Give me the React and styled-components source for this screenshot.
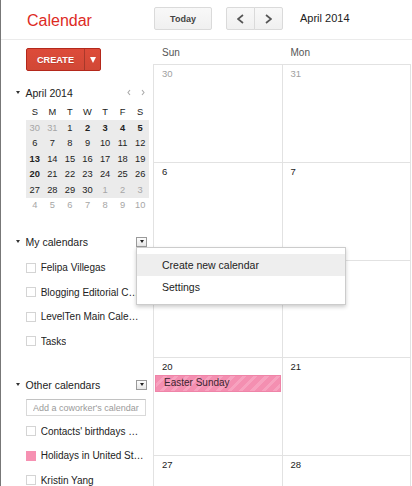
import React from "react";
import styled, { createGlobalStyle } from "styled-components";

const GlobalStyle = createGlobalStyle`
  html, body {
    margin: 0;
    padding: 0;
    background: #fff;
  }
  body {
    font-family: "Liberation Sans", Arial, sans-serif;
    color: #222;
  }
  * {
    box-sizing: border-box;
  }
`;

const Page = styled.div`
  width: 412px;
  height: 486px;
  overflow: hidden;
  border-left: 1px solid #777;
  display: flex;
  flex-direction: column;
  background: #fff;
`;

const TopBar = styled.header`
  height: 40px;
  flex: none;
  border-bottom: 1px solid #ebebeb;
  display: flex;
  align-items: flex-start;
  padding-top: 7px;
`;

const Logo = styled.div`
  width: 153px;
  padding-left: 26px;
  font-size: 16px;
  line-height: 27px;
  color: #dd2a1f;
`;

const GreyButton = styled.button`
  height: 23px;
  padding: 0;
  border: 1px solid #dadada;
  border-radius: 2px;
  background: linear-gradient(#f8f8f8, #f0f0f0);
  font-family: inherit;
  font-weight: bold;
  font-size: 9px;
  color: #444;
  display: flex;
  align-items: center;
  justify-content: center;
`;

const TodayButton = styled(GreyButton)`
  width: 58px;
`;

const NavGroup = styled.div`
  display: flex;
  margin-left: 14px;
`;

const NavButton = styled(GreyButton)`
  width: 29px;
  border-radius: ${(p) => (p.$right ? "0 2px 2px 0" : "2px 0 0 2px")};
  margin-left: ${(p) => (p.$right ? "-1px" : "0")};
`;

const MonthLabel = styled.div`
  margin-left: 17px;
  line-height: 23px;
  font-size: 11px;
  color: #222;
`;

const Body = styled.div`
  flex: 1;
  min-height: 0;
  display: flex;
`;

const Sidebar = styled.aside`
  width: 152px;
  flex: none;
  padding: 8px 3px 0 25px;
  display: flex;
  flex-direction: column;

  & > * {
    flex-shrink: 0;
  }
`;

const CreateButton = styled.div`
  display: flex;
  width: 75px;
  height: 23px;
  border: 1px solid #b4281b;
  border-radius: 2px;
  background: linear-gradient(#dd4b39, #d14836);
  color: #fff;
`;

const CreateLabel = styled.div`
  flex: 1;
  display: flex;
  align-items: center;
  justify-content: center;
  font-weight: bold;
  font-size: 9.2px;
  text-shadow: 0 1px rgba(0, 0, 0, 0.15);
`;

const CreateArrow = styled.div`
  width: 16px;
  border-left: 1px solid rgba(0, 0, 0, 0.22);
  display: flex;
  align-items: center;
  justify-content: center;
`;

const DownTriangle = styled.span`
  width: 0;
  height: 0;
  border-left: ${(p) => p.$size / 2}px solid transparent;
  border-right: ${(p) => p.$size / 2}px solid transparent;
  border-top: ${(p) => p.$h}px solid ${(p) => p.$color};
`;

const SectionHeader = styled.div`
  display: flex;
  align-items: center;
  height: 16px;
  margin-top: ${(p) => p.$top}px;
  margin-left: -11px;
  font-size: 10.5px;
  color: #222;
`;

const Toggle = styled(DownTriangle)`
  margin: 0 5.5px 0 1px;
`;

const MiniArrows = styled.div`
  margin-left: auto;
  padding-right: 5px;
  display: flex;
  gap: 10px;
  align-items: center;
`;

const MiniGrid = styled.div`
  margin-top: 4px;
  width: 123px;
  display: grid;
  grid-template-columns: repeat(7, 1fr);
  grid-auto-rows: 15.5px;
  font-size: 9.3px;
`;

const MiniDay = styled.div`
  display: flex;
  align-items: center;
  justify-content: center;
  color: ${(p) => (p.$muted ? "#a6a6a6" : "#222")};
  font-weight: ${(p) => (p.$bold ? "bold" : "normal")};
  background: ${(p) => (p.$shade ? "#ebebeb" : "transparent")};
`;

const DropBox = styled.div`
  position: relative;
  width: 11px;
  height: 10px;
  margin-left: auto;
  margin-right: 3px;
  border: 1px solid #9a9a9a;
  background: linear-gradient(#fdfdfd, #e6e6e6);
  display: flex;
  align-items: center;
  justify-content: center;
`;

const Menu = styled.div`
  position: absolute;
  left: -1px;
  top: 9px;
  width: 210px;
  padding: 6px 0;
  background: #fff;
  border: 1px solid rgba(0, 0, 0, 0.2);
  box-shadow: 0 2px 4px rgba(0, 0, 0, 0.2);
  z-index: 10;
`;

const MenuItem = styled.div`
  height: 22px;
  line-height: 22px;
  padding-left: 25px;
  font-size: 10.5px;
  color: #222;
  background: ${(p) => (p.$active ? "#eee" : "transparent")};
`;

const CalList = styled.div`
  margin-top: ${(p) => p.$top}px;
  display: flex;
  flex-direction: column;
`;

const CalItem = styled.div`
  display: flex;
  align-items: center;
  height: 24.6px;
  flex: none;
  font-size: 10px;
  color: #222;
`;

const Check = styled.span`
  flex: none;
  width: 10px;
  height: 10px;
  margin-right: 4.7px;
  border: 1px solid ${(p) => (p.$color ? p.$color : "#d4d4d4")};
  background: ${(p) => p.$color || "#fff"};
`;

const ItemLabel = styled.span`
  max-width: 103px;
  overflow: hidden;
  white-space: nowrap;
  text-overflow: ellipsis;
`;

const CoworkerInput = styled.input`
  margin-top: 6.3px;
  width: 120px;
  height: 17.4px;
  padding: 0 6px;
  border: 1px solid #d9d9d9;
  border-top-color: #c2c2c2;
  font-family: inherit;
  font-size: 9px;
  outline: none;

  &::placeholder {
    color: #9a9a9a;
  }
`;

const Main = styled.main`
  flex: 1;
  display: flex;
  flex-direction: column;
  padding-right: 1px;
`;

const ColHeads = styled.div`
  height: 24px;
  flex: none;
  padding-left: 1px;
  display: grid;
  grid-template-columns: 1fr 1fr;
  align-items: center;
`;

const ColHead = styled.div`
  padding-left: 8px;
  font-size: 10px;
  color: #555;
`;

const MonthGrid = styled.div`
  flex: none;
  display: grid;
  grid-template-columns: 1fr 1fr;
  grid-auto-rows: 97.75px;
  border-left: 1px solid #e2e2e2;
  border-top: 1px solid #e2e2e2;
`;

const Cell = styled.div`
  border-right: 1px solid #e2e2e2;
  border-bottom: 1px solid #e2e2e2;
  padding-top: 3px;
`;

const CellDate = styled.div`
  padding-left: 8px;
  font-size: 9.5px;
  line-height: 12px;
  color: ${(p) => (p.$muted ? "#a0a0a0" : "#222")};
`;

const Event = styled.div`
  margin: 2px 1px 0 1px;
  height: 16.4px;
  line-height: 14.4px;
  padding-left: 8px;
  font-size: 10px;
  color: #3b2530;
  border: 1px solid #ef84a8;
  background: repeating-linear-gradient(
    135deg,
    #f48fb1 0px,
    #f48fb1 5px,
    #f7a2bf 5px,
    #f7a2bf 8px
  );
`;

const Chevron = ({ dir, w, h, color, stroke }) => (
  <svg width={w} height={h} viewBox={`0 0 ${w} ${h}`}>
    <path
      d={
        dir === "left"
          ? `M${w - 1} 1 L1 ${h / 2} L${w - 1} ${h - 1}`
          : `M1 1 L${w - 1} ${h / 2} L1 ${h - 1}`
      }
      fill="none"
      stroke={color}
      strokeWidth={stroke}
    />
  </svg>
);

const weekdays = ["S", "M", "T", "W", "T", "F", "S"];

const miniWeeks = [
  [30, 31, 1, 2, 3, 4, 5],
  [6, 7, 8, 9, 10, 11, 12],
  [13, 14, 15, 16, 17, 18, 19],
  [20, 21, 22, 23, 24, 25, 26],
  [27, 28, 29, 30, 1, 2, 3],
  [4, 5, 6, 7, 8, 9, 10],
];

const boldDays = [2, 3, 4, 5, 13, 20];

const isMuted = (w, i) => (w === 0 && i < 2) || (w === 4 && i > 3) || w === 5;

const myCalendars = [
  "Felipa Villegas",
  "Blogging Editorial Calendar",
  "LevelTen Main Calendar",
  "Tasks",
];

const otherCalendars = [
  { name: "Contacts' birthdays and events" },
  { name: "Holidays in United States", color: "#f691b2" },
  { name: "Kristin Yang" },
];

const monthCells = [
  [{ d: 30, muted: true }, { d: 31, muted: true }],
  [{ d: 6 }, { d: 7 }],
  [{ d: 13 }, { d: 14 }],
  [{ d: 20, event: "Easter Sunday" }, { d: 21 }],
  [{ d: 27 }, { d: 28 }],
];

export default function App() {
  return (
    <>
      <GlobalStyle />
      <Page>
        <TopBar>
          <Logo>Calendar</Logo>
          <TodayButton>Today</TodayButton>
          <NavGroup>
            <NavButton>
              <Chevron dir="left" w={7} h={10} color="#555" stroke={1.7} />
            </NavButton>
            <NavButton $right>
              <Chevron dir="right" w={7} h={10} color="#555" stroke={1.7} />
            </NavButton>
          </NavGroup>
          <MonthLabel>April 2014</MonthLabel>
        </TopBar>

        <Body>
          <Sidebar>
            <CreateButton>
              <CreateLabel>CREATE</CreateLabel>
              <CreateArrow>
                <DownTriangle $size={7} $h={6} $color="#fff" />
              </CreateArrow>
            </CreateButton>

            <SectionHeader $top={13.5}>
              <Toggle $size={5} $h={3} $color="#333" />
              April 2014
              <MiniArrows>
                <Chevron dir="left" w={4} h={7} color="#aaa" stroke={1.1} />
                <Chevron dir="right" w={4} h={7} color="#aaa" stroke={1.1} />
              </MiniArrows>
            </SectionHeader>

            <MiniGrid>
              {weekdays.map((d, i) => (
                <MiniDay key={"h" + i}>{d}</MiniDay>
              ))}
              {miniWeeks.map((week, w) =>
                week.map((d, i) => (
                  <MiniDay
                    key={w + "-" + i}
                    $muted={isMuted(w, i)}
                    $shade={w < 5}
                    $bold={!isMuted(w, i) && boldDays.includes(d)}
                  >
                    {d}
                  </MiniDay>
                ))
              )}
            </MiniGrid>

            <SectionHeader $top={20.7}>
              <Toggle $size={5} $h={3} $color="#333" />
              My calendars
              <DropBox>
                <DownTriangle $size={5} $h={3} $color="#222" />
                <Menu>
                  <MenuItem $active>Create new calendar</MenuItem>
                  <MenuItem>Settings</MenuItem>
                </Menu>
              </DropBox>
            </SectionHeader>

            <CalList $top={5.7}>
              {myCalendars.map((name) => (
                <CalItem key={name}>
                  <Check />
                  <ItemLabel>{name}</ItemLabel>
                </CalItem>
              ))}
            </CalList>

            <SectionHeader $top={23}>
              <Toggle $size={5} $h={3} $color="#333" />
              Other calendars
              <DropBox>
                <DownTriangle $size={5} $h={3} $color="#222" />
              </DropBox>
            </SectionHeader>

            <CoworkerInput placeholder="Add a coworker's calendar" />

            <CalList $top={2.3}>
              {otherCalendars.map((c) => (
                <CalItem key={c.name}>
                  <Check $color={c.color} />
                  <ItemLabel>{c.name}</ItemLabel>
                </CalItem>
              ))}
            </CalList>
          </Sidebar>

          <Main>
            <ColHeads>
              <ColHead>Sun</ColHead>
              <ColHead>Mon</ColHead>
            </ColHeads>
            <MonthGrid>
              {monthCells.map((row, r) =>
                row.map((c, i) => (
                  <Cell key={r + "-" + i}>
                    <CellDate $muted={c.muted}>{c.d}</CellDate>
                    {c.event && <Event>{c.event}</Event>}
                  </Cell>
                ))
              )}
            </MonthGrid>
          </Main>
        </Body>
      </Page>
    </>
  );
}
